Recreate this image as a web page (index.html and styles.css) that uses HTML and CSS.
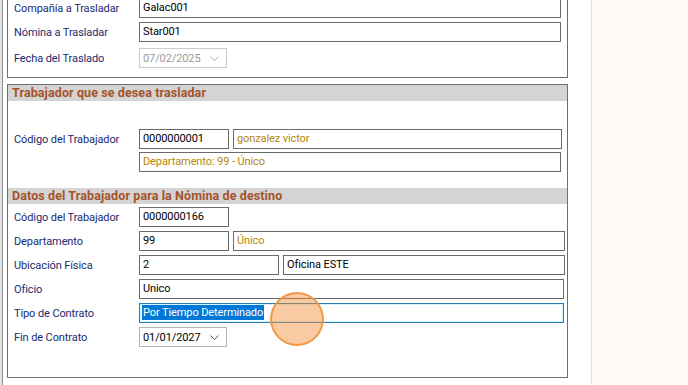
FILE: index.html
```html
<!DOCTYPE html>
<html>
<head>
	<meta charset="utf-8" />
	<title>Traslado de Trabajador</title>
	<link rel="stylesheet" href="styles.css">
</head>
<body>

<div class="screen">
	<div class="app">

		<div class="panel panel-top">
			<div class="rows">
				<div class="row">
					<span class="label">Compañía a Trasladar</span>
					<div class="field w-full">Galac001</div>
				</div>
				<div class="row">
					<span class="label">Nómina a Trasladar</span>
					<div class="field w-full">Star001</div>
				</div>
				<div class="row row-date">
					<span class="label">Fecha del Traslado</span>
					<div class="date disabled">
						<span>07/02/2025</span>
						<svg class="chev" width="9" height="5" viewBox="0 0 9 5"><polyline points="0.5,0.5 4.5,4.5 8.5,0.5" fill="none" stroke="currentColor" stroke-width="1"/></svg>
					</div>
				</div>
			</div>
		</div>

		<div class="panel panel-main">
			<div class="header">Trabajador que se desea trasladar</div>
			<div class="rows rows-origin">
				<div class="row">
					<span class="label">Código del Trabajador</span>
					<div class="field w-code">0000000001</div>
					<div class="field w-name gold">gonzalez victor</div>
				</div>
				<div class="row">
					<span class="label"></span>
					<div class="field w-full gold">Departamento: 99 - Único</div>
				</div>
			</div>

			<div class="header header-second">Datos del Trabajador para la Nómina de destino</div>
			<div class="rows rows-dest">
				<div class="row">
					<span class="label">Código del Trabajador</span>
					<div class="field w-code">0000000166</div>
				</div>
				<div class="row">
					<span class="label">Departamento</span>
					<div class="field w-code">99</div>
					<div class="field w-name2 gold">Único</div>
				</div>
				<div class="row">
					<span class="label">Ubicación Física</span>
					<div class="field w-ubic">2</div>
					<div class="field w-ofic">Oficina ESTE</div>
				</div>
				<div class="row">
					<span class="label">Oficio</span>
					<div class="field w-wide">Unico</div>
				</div>
				<div class="row">
					<span class="label">Tipo de Contrato</span>
					<div class="field w-wide focused"><span class="selected">Por Tiempo Determinado</span></div>
				</div>
				<div class="row row-date">
					<span class="label">Fin de Contrato</span>
					<div class="date">
						<span>01/01/2027</span>
						<svg class="chev" width="9" height="5" viewBox="0 0 9 5"><polyline points="0.5,0.5 4.5,4.5 8.5,0.5" fill="none" stroke="currentColor" stroke-width="1"/></svg>
					</div>
				</div>
			</div>

			<!-- click marker from the recording -->
			<div class="click-dot"></div>
		</div>

	</div>
	<div class="side"></div>
</div>

</body>
</html>
```

FILE: styles.css
```css
html, body {
	margin: 0;
	padding: 0;
	height: 100%;
	overflow: hidden;
}

body {
	font-family: Roboto, "Liberation Sans", sans-serif;
	font-size: 11px;
	letter-spacing: -0.1px;
	background: #fcf9f6;
}

.screen {
	display: flex;
	height: 385px;
}

.app {
	width: 584px;
	border-left: 2px solid #e4e4e4;
	box-shadow: inset 1px 0 0 #8e8e8e;
	padding-left: 5px;
	background: white;
}

.side {
	flex: 1;
	border-left: 1px solid #e3e3e3;
	background: #fcf9f6;
}

/* group boxes */
.panel {
	position: relative;
	width: 559px;
	border: 1px solid #6e6e6e;
}
.panel-top {
	margin-top: -8px;
	padding: 5px 0 9px 0;
}
.panel-main {
	margin-top: 6px;
	height: 292px;
}

.header {
	background: #d4d4d4;
	color: #a5532b;
	font-weight: bold;
	font-size: 12.5px;
	letter-spacing: 0.1px;
	height: 16px;
	line-height: 15px;
	padding-left: 4px;
}
.header-second {
	margin-top: 16px;
}

.rows {
	display: flex;
	flex-direction: column;
	gap: 4px;
}
.rows-origin {
	margin-top: 28px;
	gap: 3px;
}
.rows-dest {
	margin-top: 3px;
}
.row {
	display: flex;
	align-items: center;
	gap: 4px;
	padding-left: 6px;
	height: 20px;
}
.panel-top .row-date {
	margin-top: 2px;
}

.label {
	width: 121px;
	color: #1b2a6e;
	white-space: nowrap;
}

.field {
	box-sizing: border-box;
	height: 20px;
	border: 1px solid #6a6a6a;
	padding: 0 3px;
	line-height: 18px;
	color: black;
	white-space: nowrap;
}
.field.gold { color: #b8860b; }
.field.focused {
	border-color: #2a7ab0;
	box-shadow: inset 0 0 0 1px #d2f4fb;
	padding-left: 2px;
}
.selected {
	background: #0078d7;
	color: white;
	padding: 1px 1px;
}

.w-full { width: 422px; }
.w-code { width: 90px; }
.w-name { width: 329px; }
.w-name2 { width: 332px; }
.w-ubic { width: 140px; }
.w-ofic { width: 282px; }
.w-wide { width: 425px; }

/* date pickers */
.date {
	box-sizing: border-box;
	width: 88px;
	height: 20px;
	border: 1px solid #b4b4b4;
	display: flex;
	align-items: center;
	justify-content: space-between;
	padding: 0 7px 0 3px;
	color: black;
}
.date .chev { color: #555; }
.date.disabled {
	border-color: #cccccc;
	color: #9a9a9a;
}
.date.disabled .chev { color: #b0b0b0; }

.click-dot {
	position: absolute;
	left: 262px;
	top: 207px;
	width: 50px;
	height: 50px;
	border-radius: 50%;
	background: rgba(245, 140, 50, 0.45);
	border: 2px solid rgba(238, 148, 60, 0.9);
}
```
